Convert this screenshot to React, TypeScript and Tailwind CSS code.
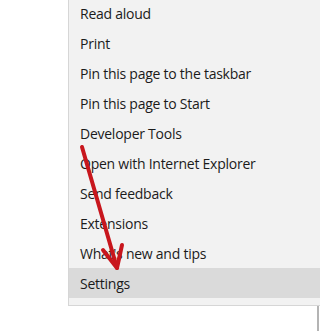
import React from "react";

const items = [
  "Read aloud",
  "Print",
  "Pin this page to the taskbar",
  "Pin this page to Start",
  "Developer Tools",
  "Open with Internet Explorer",
  "Send feedback",
  "Extensions",
  "What's new and tips",
  "Settings",
];

export default function App() {
  return (
    <div
      className="relative w-[320px] h-[331px] bg-white flex overflow-hidden text-[#1b1b1b]"
      style={{ fontFamily: '"Open Sans", "Noto Sans", sans-serif' }}
    >
      {/* blank page area left of the menu */}
      <div className="w-[68px] shrink-0" />

      <div className="flex-1 flex flex-col">
        {/* the menu panel */}
        <div className="bg-[#f2f2f2] border-l border-b border-[#d6d6d6] -mt-[2px] pb-[7px]">
          {items.map((label) => (
            <div
              key={label}
              className={
                label === "Settings"
                  ? "h-[30px] flex items-center pl-[11px] text-[14px] tracking-[-0.25px] bg-[#dadada]"
                  : "h-[30px] flex items-center pl-[11px] text-[14px] tracking-[-0.25px]"
              }
            >
              {label}
            </div>
          ))}
        </div>
        {/* window edge under the menu */}
        <div className="flex-1 mr-px border-r-2 border-[#b4b4b4]" />
      </div>

      {/* red arrow drawn over the menu */}
      <svg
        className="absolute left-0 top-0 pointer-events-none"
        width="320"
        height="331"
        viewBox="0 0 320 331"
      >
        <path
          d="M82 147 L117 268"
          stroke="#c8161d"
          strokeWidth="4"
          strokeLinecap="round"
          fill="none"
        />
        <path
          d="M103 250 L117 268 L122 245"
          stroke="#c8161d"
          strokeWidth="4"
          strokeLinecap="round"
          strokeLinejoin="round"
          fill="none"
        />
      </svg>
    </div>
  );
}
